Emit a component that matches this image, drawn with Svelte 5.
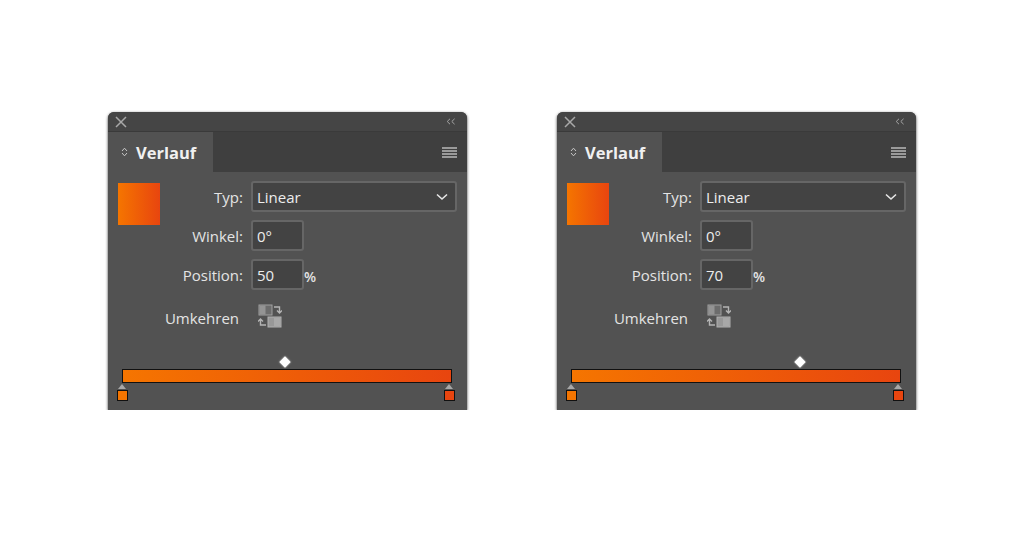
<script>
  const panels = [{ position: 50 }, { position: 70 }];
</script>

<div class="page">
  {#each panels as panel}
    <section class="panel">
      <header class="titlebar">
        <svg class="close" viewBox="0 0 12 12" width="12" height="12">
          <path d="M1 1L11 11M11 1L1 11" stroke="#a8a8a8" stroke-width="1.5" fill="none" />
        </svg>
        <svg class="collapse" viewBox="0 0 10 7" width="10" height="7">
          <path d="M4 .8L1.2 3.5 4 6.2M8.6 .8L5.8 3.5 8.6 6.2" stroke="#a5a5a5" stroke-width="1" fill="none" />
        </svg>
      </header>

      <div class="tabrow">
        <div class="tab">
          <svg class="updown" viewBox="0 0 7 10" width="7" height="10">
            <path d="M1 4L3.5 1.2 6 4M1 6L3.5 8.8 6 6" stroke="#c8c8c8" stroke-width="1" fill="none" />
          </svg>
          <span>Verlauf</span>
        </div>
        <div class="menu"><i></i><i></i><i></i><i></i></div>
      </div>

      <div class="body">
        <div class="top">
          <div class="swatch"></div>
          <div class="fields">
            <div class="row">
              <span class="label">Typ:</span>
              <div class="input select">
                <span>Linear</span>
                <svg viewBox="0 0 12 8" width="12" height="8">
                  <path d="M1 1.5L6 6 11 1.5" stroke="#e6e6e6" stroke-width="1.6" fill="none" />
                </svg>
              </div>
            </div>
            <div class="row">
              <span class="label">Winkel:</span>
              <div class="input small"><span>0°</span></div>
            </div>
            <div class="row">
              <span class="label">Position:</span>
              <div class="input small"><span>{panel.position}</span></div>
              <span class="percent">%</span>
            </div>
            <div class="row reverse">
              <span class="label">Umkehren</span>
              <svg class="swap" viewBox="0 0 24 24" width="24" height="24">
                <rect x="1" y="1" width="13" height="10" fill="#6c6c6c" stroke="#a0a0a0" />
                <rect x="1.5" y="1.5" width="6" height="9" fill="#949494" />
                <path d="M16 3H21.5V8.5M19 6.5L21.5 9 24 6.5" stroke="#b4b4b4" stroke-width="1.4" fill="none" />
                <rect x="10" y="13" width="13" height="10" fill="#989898" stroke="#b0b0b0" />
                <rect x="16" y="14" width="6" height="8" fill="#a8a8a8" />
                <path d="M8 21H2.5V15.5M0 17.5L2.5 15 5 17.5" stroke="#b4b4b4" stroke-width="1.4" fill="none" />
              </svg>
            </div>
          </div>
        </div>

        <div class="slider">
          <div class="diamond-track">
            <span class="diamond" style="left: {panel.position}%"></span>
          </div>
          <div class="bar"></div>
          <div class="stops">
            <span class="stop left"></span>
            <span class="stop right"></span>
          </div>
        </div>
      </div>
    </section>
  {/each}
</div>

<style>
  :global(body) {
    background: #fff;
  }

  .page {
    display: flex;
    gap: 90px;
    padding: 112px 0 0 108px;
    font-family: "Open Sans", "Noto Sans", sans-serif;
  }

  .panel {
    width: 359px;
    height: 298px;
    background: #525252;
    border-radius: 6px 6px 0 0;
    box-shadow: 0 1px 3px rgba(0, 0, 0, 0.8);
    overflow: hidden;
    display: flex;
    flex-direction: column;
  }

  .titlebar {
    height: 20px;
    flex: none;
    display: flex;
    align-items: center;
    justify-content: space-between;
    padding: 0 11px 0 7px;
    background: #454545;
    border-bottom: 1px solid #3a3a3a;
    box-sizing: border-box;
  }

  .tabrow {
    height: 40px;
    flex: none;
    display: flex;
    justify-content: space-between;
    align-items: center;
    background: #3f3f3f;
  }

  .tab {
    width: 105px;
    height: 100%;
    background: #525252;
    display: flex;
    align-items: center;
    gap: 8px;
    padding-left: 13px;
    box-sizing: border-box;
    color: #f0f0f0;
    font-size: 16.5px;
    font-weight: 700;
  }

  .menu {
    display: flex;
    flex-direction: column;
    gap: 1px;
    margin-right: 10px;
  }

  .menu i {
    display: block;
    width: 15px;
    height: 2px;
    background: #9a9a9a;
  }

  .body {
    flex: 1;
    display: flex;
    flex-direction: column;
    justify-content: space-between;
    padding: 9px 10px;
    box-sizing: border-box;
  }

  .top {
    display: flex;
    align-items: flex-start;
  }

  .swatch {
    width: 42px;
    height: 42px;
    margin-top: 2px;
    flex: none;
    background: linear-gradient(to right, #f57500, #e8450f);
  }

  .fields {
    display: flex;
    flex-direction: column;
    gap: 8px;
    flex: 1;
  }

  .row {
    display: flex;
    align-items: center;
    color: #e4e4e4;
    font-size: 15px;
    font-weight: 500;
  }

  .label {
    width: 83px;
    text-align: right;
    margin-right: 8px;
    flex: none;
    white-space: nowrap;
  }

  .input {
    height: 31px;
    box-sizing: border-box;
    border: 2px solid #666;
    border-radius: 3px;
    background: #434343;
    display: flex;
    align-items: center;
    padding: 1px 5px 0 4px;
    color: #ededed;
  }

  .select {
    width: 206px;
    justify-content: space-between;
    padding-right: 7px;
  }

  .small {
    width: 53px;
  }

  .percent {
    margin-top: 3px;
    font-size: 14px;
    font-weight: 600;
  }

  .reverse {
    margin-top: 5px;
    height: 26px;
  }

  .reverse .label {
    width: 79px;
    padding-top: 3px;
  }

  .swap {
    margin: 0 0 0 11px;
  }

  .slider {
    margin: 0 5px 0 4px;
  }

  .diamond-track {
    position: relative;
    height: 10px;
    margin-bottom: 2px;
  }

  .diamond {
    position: absolute;
    top: 1px;
    width: 8px;
    height: 8px;
    margin-left: -6px;
    background: #fff;
    box-shadow: 0 0 2px rgba(255, 255, 255, 0.7);
    transform: rotate(45deg);
  }

  .bar {
    height: 14px;
    box-sizing: border-box;
    border: 1.5px solid #111;
    background: linear-gradient(to right, #f57500, #e8450f);
  }

  .stops {
    display: flex;
    justify-content: space-between;
    margin: 2px -3px 0 -5px;
  }

  .stop {
    display: block;
    position: relative;
    width: 11px;
    height: 11px;
    margin-top: 5px;
    box-sizing: border-box;
    border: 1.5px solid #111;
  }

  .stop::before {
    content: "";
    position: absolute;
    left: 0;
    top: -7px;
    border: 4px solid transparent;
    border-top: 0;
    border-bottom: 5px solid #a8a8a8;
  }

  .stop.left {
    background: #f57500;
  }

  .stop.right {
    background: #e8450f;
  }
</style>
